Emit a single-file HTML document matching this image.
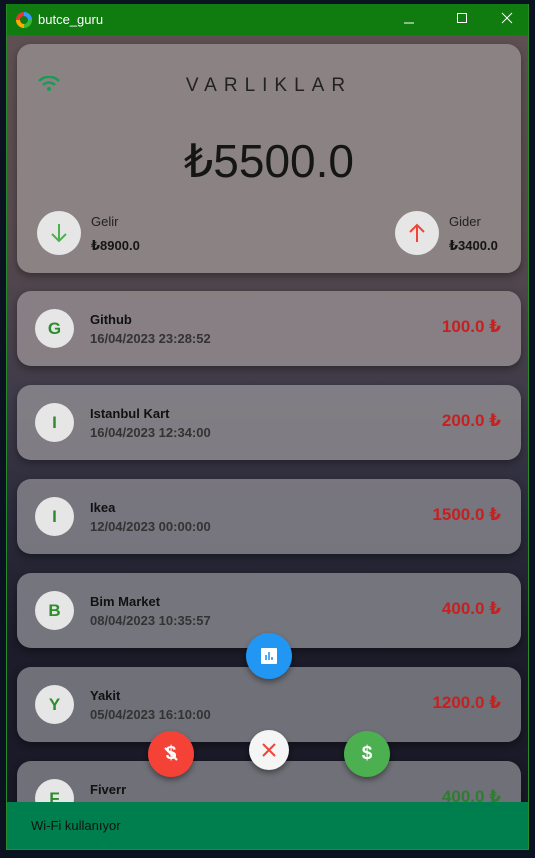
<!DOCTYPE html>
<html><head><meta charset="utf-8"><style>
*{margin:0;padding:0;box-sizing:border-box}
body{width:535px;height:858px;background:#0b1220;font-family:"Liberation Sans","DejaVu Sans",sans-serif;position:relative;overflow:hidden}
.win{position:absolute;left:6px;top:4px;width:523px;height:846px;overflow:hidden;border:1px solid #2a8a2a;border-top:none}
.title{height:31px;background:#107c10;color:#fff;font-size:13px;display:flex;align-items:center;position:relative}
.content{position:absolute;top:31px;left:0;right:0;bottom:0;background:linear-gradient(180deg,#5e5052 0%,#564a4e 25%,#3e3a48 45%,#2a2a3a 60%,#1c1c2a 75%,#181826 100%)}
.card{position:absolute;left:10px;width:504px;border-radius:14px;box-shadow:0 3px 8px rgba(0,0,0,.35)}
.top{top:9px;height:229px;background:#8a8283}
.item{height:75px;background:rgba(140,140,145,.8)}
.av{position:absolute;left:18px;top:18px;width:39px;height:39px;border-radius:50%;background:#e6e6e6;color:#2e8b2e;font-weight:bold;font-size:17px;text-align:center;line-height:39px}
.nm{position:absolute;left:73px;top:21px;font-weight:bold;font-size:13px;color:#111}
.dt{position:absolute;left:73px;top:40px;font-weight:bold;font-size:13px;color:#333}
.amt{position:absolute;right:20px;top:26px;font-weight:bold;font-size:17px;color:#c62020}
.fab{position:absolute;border-radius:50%;box-shadow:0 3px 6px rgba(0,0,0,.4);display:flex;align-items:center;justify-content:center}
</style></head><body>
<div class="win">
<div class="title">
<svg width="16" height="16" style="margin:0 6px 0 9px" viewBox="0 0 16 16"><circle cx="8" cy="8" r="6" fill="none" stroke="#e33" stroke-width="4"/><path d="M8 2a6 6 0 0 1 6 6" stroke="#39f" stroke-width="4" fill="none"/><path d="M14 8a6 6 0 0 1-6 6" stroke="#3b3" stroke-width="4" fill="none"/><path d="M8 14a6 6 0 0 1-6-6" stroke="#fa0" stroke-width="4" fill="none"/></svg>butce_guru
<svg style="position:absolute;left:396px;top:11px" width="12" height="10"><path d="M1 8h10" stroke="#fff"/></svg>
<svg style="position:absolute;left:449px;top:8px" width="12" height="12"><rect x="1.5" y="1.5" width="9" height="9" fill="none" stroke="#fff"/></svg>
<svg style="position:absolute;left:494px;top:8px" width="12" height="12"><path d="M1 1l10 10M11 1L1 11" stroke="#fff"/></svg>
</div>
<div class="content">
<div class="card top">
<svg style="position:absolute;left:21px;top:32px" width="22" height="16" viewBox="0 0 22 16"><path d="M1 5a14 14 0 0 1 20 0" stroke="#1a9a55" stroke-width="2.4" fill="none"/><path d="M5 9a8.5 8.5 0 0 1 12 0" stroke="#1a9a55" stroke-width="2.4" fill="none"/><circle cx="11" cy="13" r="2" fill="#1a9a55"/></svg>
<div style="position:absolute;left:0;right:0;top:31px;text-align:center;font-size:19px;letter-spacing:7px;color:#222">VARLIKLAR</div>
<div style="position:absolute;left:0;right:0;top:90px;text-align:center;font-size:46px;color:#151515">₺5500.0</div>
<div style="position:absolute;left:20px;top:167px;width:44px;height:44px;border-radius:50%;background:#e6e6e6"><svg width="44" height="44"><path d="M22 13v17M15 23l7 7 7-7" stroke="#4caf50" stroke-width="2" fill="none"/></svg></div>
<div style="position:absolute;left:74px;top:170px;font-size:13px;color:#222">Gelir</div>
<div style="position:absolute;left:74px;top:194px;font-size:13px;font-weight:bold;color:#151515">₺8900.0</div>
<div style="position:absolute;left:378px;top:167px;width:44px;height:44px;border-radius:50%;background:#e6e6e6"><svg width="44" height="44"><path d="M22 31V14M15 21l7-7 7 7" stroke="#f44336" stroke-width="2" fill="none"/></svg></div>
<div style="position:absolute;left:432px;top:170px;font-size:13px;color:#222">Gider</div>
<div style="position:absolute;left:432px;top:194px;font-size:13px;font-weight:bold;color:#151515">₺3400.0</div>
</div>
<div class="card item" style="top:256px;background:rgba(142,134,138,.9)"><div class="av">G</div><div class="nm">Github</div><div class="dt">16/04/2023 23:28:52</div><div class="amt">100.0 ₺</div></div>
<div class="card item" style="top:350px;background:rgba(138,134,140,.88)"><div class="av">I</div><div class="nm">Istanbul Kart</div><div class="dt">16/04/2023 12:34:00</div><div class="amt">200.0 ₺</div></div>
<div class="card item" style="top:444px;background:rgba(130,128,136,.88)"><div class="av">I</div><div class="nm">Ikea</div><div class="dt">12/04/2023 00:00:00</div><div class="amt">1500.0 ₺</div></div>
<div class="card item" style="top:538px;background:#75757d"><div class="av">B</div><div class="nm">Bim Market</div><div class="dt">08/04/2023 10:35:57</div><div class="amt">400.0 ₺</div></div>
<div class="card item" style="top:632px;background:#707078"><div class="av">Y</div><div class="nm">Yakit</div><div class="dt">05/04/2023 16:10:00</div><div class="amt">1200.0 ₺</div></div>
<div class="card item" style="top:726px;background:#707078"><div class="av">F</div><div class="nm">Fiverr</div><div class="amt" style="color:#2e7d32">400.0 ₺</div></div>
<div class="fab" style="left:239px;top:598px;width:46px;height:46px;background:#2196f3"><svg width="16" height="16"><rect width="16" height="16" rx="1" fill="#fff"/><path d="M5 12V7M8 12V4M11 12V9" stroke="#2196f3" stroke-width="1.6"/></svg></div>
<div class="fab" style="left:141px;top:696px;width:46px;height:46px;background:#f44336;color:#fff;font-weight:bold;font-size:19px">$<svg style="position:absolute;left:14px;top:14px" width="18" height="18"><path d="M3 3l12 12" stroke="#fff" stroke-width="2"/></svg></div>
<div class="fab" style="left:242px;top:695px;width:40px;height:40px;background:#f5f5f5"><svg width="16" height="16"><path d="M2 2l12 12M14 2L2 14" stroke="#f44336" stroke-width="2"/></svg></div>
<div class="fab" style="left:337px;top:696px;width:46px;height:46px;background:#4caf50;color:#fff;font-weight:bold;font-size:19px">$</div>
<div style="position:absolute;left:0;right:0;top:767px;height:48px;background:#007f4e;color:#111;font-size:13px;padding:16px 0 0 24px">Wi-Fi kullanıyor</div>
</div>
</div>
</body></html>
